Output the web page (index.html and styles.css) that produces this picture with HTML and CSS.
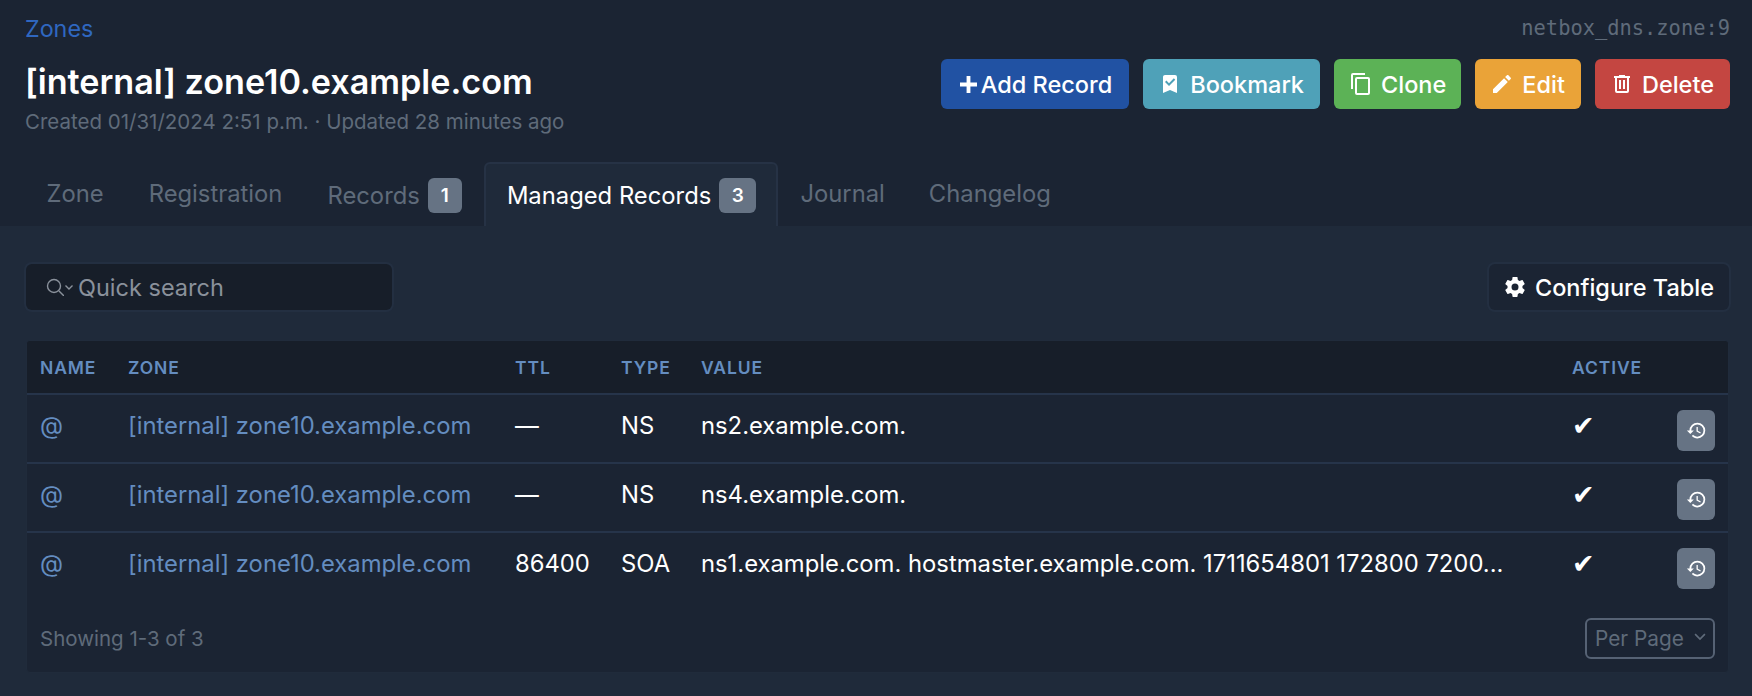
FILE: index.html
```html
<!DOCTYPE html>
<html lang="en">
<head>
<meta charset="utf-8">
<title>[internal] zone10.example.com</title>
<link rel="stylesheet" href="styles.css">
</head>
<body>
<header class="head">
  <div class="crumb-row">
    <a class="crumb">Zones</a>
    <code class="objid">netbox_dns.zone:9</code>
  </div>
  <div class="title-row">
    <div class="title-block">
      <h1 class="title">[internal] zone10.example.com</h1>
      <p class="meta">Created 01/31/2024 2:51 p.m. · Updated 28 minutes ago</p>
    </div>
    <div class="actions">
      <a class="btn btn-blue btn-add"><svg class="ic-plus" viewBox="4 4 16 16"><path d="M12 4v16M4 12h16" fill="none" stroke="currentColor" stroke-width="3.600"/></svg>Add Record</a>
      <a class="btn btn-cyan"><svg class="ic" viewBox="0 0 24 24"><path fill="currentColor" d="M17,3A2,2 0 0,1 19,5V21L12,18L5,21V5C5,3.89 5.9,3 7,3H17M11,14L17.25,7.76L15.84,6.34L11,11.18L8.41,8.59L7,10L11,14Z"/></svg>Bookmark</a>
      <a class="btn btn-green"><svg class="ic" viewBox="0 0 24 24"><path fill="currentColor" d="M19,21H8V7H19M19,5H8A2,2 0 0,0 6,7V21A2,2 0 0,0 8,23H19A2,2 0 0,0 21,21V7A2,2 0 0,0 19,5M16,1H4A2,2 0 0,0 2,3V17H4V3H16V1Z"/></svg>Clone</a>
      <a class="btn btn-orange"><svg class="ic" viewBox="0 0 24 24"><path fill="currentColor" d="M20.71,7.04C21.1,6.65 21.1,6 20.71,5.63L18.37,3.29C18,2.9 17.35,2.9 16.96,3.29L15.12,5.12L18.87,8.87M3,17.25V21H6.75L17.81,9.93L14.06,6.18L3,17.25Z"/></svg>Edit</a>
      <a class="btn btn-red"><svg class="ic" viewBox="0 0 24 24"><path fill="currentColor" d="M9,3V4H4V6H5V19A2,2 0 0,0 7,21H17A2,2 0 0,0 19,19V6H20V4H15V3H9M7,6H17V19H7V6M9,8V17H11V8H9M13,8V17H15V8H13Z"/></svg>Delete</a>
    </div>
  </div>
  <nav class="tabs">
    <a class="tab tab-raised">Zone</a>
    <a class="tab tab-raised">Registration</a>
    <a class="tab">Records<span class="badge">1</span></a>
    <a class="tab active">Managed Records<span class="badge">3</span></a>
    <a class="tab tab-raised tab-journal">Journal</a>
    <a class="tab tab-raised">Changelog</a>
  </nav>
</header>
<main class="content">
  <div class="toolbar">
    <div class="search">
      <svg class="search-ic" viewBox="1 2 18 18"><circle cx="9" cy="10" r="6.500" fill="none" stroke="currentColor" stroke-width="1.400"/><path d="M14 15l5 5" fill="none" stroke="currentColor" stroke-width="1.400"/></svg><svg class="search-caret" viewBox="0 0 10 10"><path d="M1.500 3.500 5 7l3.500-3.500" fill="none" stroke="currentColor" stroke-width="1.400"/></svg>
      <span class="search-text">Quick search</span>
    </div>
    <a class="config"><svg class="ic-gear" viewBox="0 0 24 24"><path fill="currentColor" d="M12,15.5A3.5,3.5 0 0,1 8.5,12A3.5,3.5 0 0,1 12,8.5A3.5,3.5 0 0,1 15.5,12A3.5,3.5 0 0,1 12,15.5M19.43,12.97C19.47,12.65 19.5,12.33 19.5,12C19.5,11.67 19.47,11.34 19.43,11L21.54,9.37C21.73,9.22 21.78,8.95 21.66,8.73L19.66,5.27C19.54,5.05 19.27,4.96 19.05,5.05L16.56,6.05C16.04,5.66 15.5,5.32 14.87,5.07L14.5,2.42C14.46,2.18 14.25,2 14,2H10C9.75,2 9.54,2.18 9.5,2.42L9.13,5.07C8.5,5.32 7.96,5.66 7.44,6.05L4.95,5.05C4.73,4.96 4.46,5.05 4.34,5.27L2.34,8.73C2.21,8.95 2.27,9.22 2.46,9.37L4.57,11C4.53,11.34 4.5,11.67 4.5,12C4.5,12.33 4.53,12.65 4.57,12.97L2.46,14.63C2.27,14.78 2.21,15.05 2.34,15.27L4.34,18.73C4.46,18.95 4.73,19.03 4.95,18.95L7.44,17.94C7.96,18.34 8.5,18.68 9.13,18.93L9.5,21.58C9.54,21.82 9.75,22 10,22H14C14.25,22 14.46,21.82 14.5,21.58L14.87,18.93C15.5,18.67 16.04,18.34 16.56,17.94L19.05,18.95C19.27,19.03 19.54,18.95 19.66,18.73L21.66,15.27C21.78,15.05 21.73,14.78 21.54,14.63L19.43,12.97Z"/></svg>Configure Table</a>
  </div>
  <section class="card">
    <table class="grid">
      <thead>
        <tr>
          <th class="c-name">NAME</th><th class="c-zone">ZONE</th><th class="c-ttl">TTL</th><th class="c-type">TYPE</th><th class="c-value">VALUE</th><th class="c-active">ACTIVE</th><th class="c-act"></th>
        </tr>
      </thead>
      <tbody>
        <tr>
          <td><a class="lnk">@</a></td><td><a class="lnk">[internal] zone10.example.com</a></td><td>—</td><td>NS</td><td>ns2.example.com.</td><td class="check">✔</td>
          <td class="act-cell"><a class="hist"><svg class="ic-hist" viewBox="0 0 24 24"><path fill="currentColor" d="M13.5,8H12V13L16.28,15.54L17,14.33L13.5,12.25V8M13,3A9,9 0 0,0 4,12H1L4.96,16.03L9,12H6A7,7 0 0,1 13,5A7,7 0 0,1 20,12A7,7 0 0,1 13,19C11.07,19 9.32,18.21 8.06,16.94L6.64,18.36C8.27,20 10.5,21 13,21A9,9 0 0,0 22,12A9,9 0 0,0 13,3"/></svg></a></td>
        </tr>
        <tr>
          <td><a class="lnk">@</a></td><td><a class="lnk">[internal] zone10.example.com</a></td><td>—</td><td>NS</td><td>ns4.example.com.</td><td class="check">✔</td>
          <td class="act-cell"><a class="hist"><svg class="ic-hist" viewBox="0 0 24 24"><path fill="currentColor" d="M13.5,8H12V13L16.28,15.54L17,14.33L13.5,12.25V8M13,3A9,9 0 0,0 4,12H1L4.96,16.03L9,12H6A7,7 0 0,1 13,5A7,7 0 0,1 20,12A7,7 0 0,1 13,19C11.07,19 9.32,18.21 8.06,16.94L6.64,18.36C8.27,20 10.5,21 13,21A9,9 0 0,0 22,12A9,9 0 0,0 13,3"/></svg></a></td>
        </tr>
        <tr>
          <td><a class="lnk">@</a></td><td><a class="lnk">[internal] zone10.example.com</a></td><td>86400</td><td>SOA</td><td>ns1.example.com. hostmaster.example.com. 1711654801 172800 7200...</td><td class="check">✔</td>
          <td class="act-cell"><a class="hist"><svg class="ic-hist" viewBox="0 0 24 24"><path fill="currentColor" d="M13.5,8H12V13L16.28,15.54L17,14.33L13.5,12.25V8M13,3A9,9 0 0,0 4,12H1L4.96,16.03L9,12H6A7,7 0 0,1 13,5A7,7 0 0,1 20,12A7,7 0 0,1 13,19C11.07,19 9.32,18.21 8.06,16.94L6.64,18.36C8.27,20 10.5,21 13,21A9,9 0 0,0 22,12A9,9 0 0,0 13,3"/></svg></a></td>
        </tr>
      </tbody>
    </table>
    <footer class="foot">
      <span class="showing">Showing 1-3 of 3</span>
      <span class="perpage">Per Page<svg class="pp-caret" viewBox="0 0 10 10"><path d="M1.500 3 5 6.500 8.500 3" fill="none" stroke="currentColor" stroke-width="1.200"/></svg></span>
    </footer>
  </section>
</main>
</body>
</html>
```
FILE: styles.css
```css
* { box-sizing: border-box; }
html, body { height: 100%; }
body {
  margin: 0;
  background: #1f2a3a;
  color: #fff;
  font-family: Inter, "Liberation Sans", sans-serif;
  font-size: 22px;
  display: flex;
  flex-direction: column;
  overflow: hidden;
}
.head { background: #1b2433; padding: 14px 22px 0 25px; height: 226px; flex: none; }
.crumb-row { display: flex; justify-content: space-between; align-items: center; height: 28px; }
.crumb { color: #2f67c0; font-size: 23.300px; }
.objid { font-family: "DejaVu Sans Mono", monospace; font-size: 20.400px; color: #5f6b7a; }
.title-row { display: flex; justify-content: space-between; margin-top: 17px; height: 79px; }
.title-block { padding-top: 2px; }
.title { margin: 0; font-size: 34.150px; font-weight: 600; line-height: 41px; }
.meta { margin: 7px 0 0; font-size: 20.500px; line-height: 26px; color: #5f6b7a; }
.actions { display: flex; gap: 14px; height: 50px; }
.btn {
  display: flex; align-items: center; gap: 8px;
  height: 50px; padding: 0 16px 0 15px;
  border-radius: 6px; font-size: 23.500px; font-weight: 500; color: #fff;
}
.ic { width: 24px; height: 24px; flex: none; }
.ic-plus { width: 17px; height: 17px; flex: none; }
.btn-add { gap: 4px; padding: 0 17px 0 19px; }
.btn-blue { background: #2152a3; }
.btn-cyan { background: #4fa1b8; }
.btn-green { background: #5cb256; padding-right: 15px; }
.btn-orange { background: #eaa338; }
.btn-red { background: #c44641; }
.tabs { display: flex; margin: 24px 0 0 -1px; align-items: flex-end; height: 64px; }
.tab {
  display: flex; align-items: center; height: 64px;
  padding: 0 20.500px; font-size: 23.800px; color: #5f6b7a;
  border: 2px solid transparent; border-bottom: 0;
}
.tab-raised { padding-bottom: 4px; }
.tab.active {
  background: #1f2a3a; color: #fff; padding-right: 19.500px;
  border-color: #263245; border-radius: 6px 6px 0 0;
}
.tab-journal { padding-right: 19.500px; }
.badge {
  display: flex; align-items: center; justify-content: center;
  height: 35px; padding: 0 13px; margin-left: 8px;
  border-radius: 6px; background: #667384; color: #fff;
  font-size: 19px; font-weight: 600;
}
.active .badge { padding: 0 12.500px; }
.content { padding: 38px 23px 0 26px; flex: 1; }
.toolbar { display: flex; justify-content: space-between; align-items: center; height: 46px; }
.search {
  display: flex; align-items: center; width: 366px; height: 46px; padding-left: 20px;
  background: #171e29; border-radius: 6px; box-shadow: 0 0 0 2px #232f41;
  color: #8a919b; font-size: 23.500px;
}
.search-ic { width: 18px; height: 18px; flex: none; }
.search-caret { width: 10px; height: 10px; flex: none; margin-right: 4px; }
.config {
  display: flex; align-items: center; gap: 8px; height: 46px; padding: 0 15px 0 14px;
  background: #1b2433; border-radius: 6px; box-shadow: 0 0 0 2px #232f41;
  font-size: 23.500px; font-weight: 500; color: #fff;
}
.ic-gear { width: 24px; height: 24px; flex: none; }
.card {
  margin-top: 30px; background: #1b2433; border: 1px solid #202b3b; border-radius: 4px;
  height: 333px; overflow: hidden;
}
.grid { width: 100%; border-collapse: collapse; table-layout: fixed; }
.grid th {
  height: 53px; padding: 0 0 0 13px; text-align: left; background: #171e29;
  color: #648dc0; font-size: 17.500px; font-weight: 600; letter-spacing: .9px;
  border-bottom: 2px solid #26344a;
}
.grid td {
  height: 69px; padding: 0 0 7px 13px; font-size: 23.800px; color: #fff;
  border-bottom: 2px solid #26344a; white-space: nowrap; overflow: hidden;
}
.grid tbody tr:last-child td { border-bottom: 0; }
.c-name { width: 88px; }
.c-zone { width: 387px; }
.c-ttl { width: 106px; }
.c-type { width: 80px; }
.c-value { width: 871px; }
.c-active { width: 105px; }
.lnk { color: #648dc0; }
.grid td.check { font-size: 27px; line-height: 1; }
.grid td.act-cell { padding: 3px 0 0 13px; }
.hist {
  display: flex; align-items: center; justify-content: center;
  width: 38px; height: 41px; border-radius: 6px; background: #667384; color: #fff;
}
.ic-hist { width: 21px; height: 21px; }
.foot { display: flex; justify-content: space-between; align-items: center; padding: 0 13px 0 13px; height: 74px; }
.showing { font-size: 20.500px; color: #5f6b7a; }
.perpage {
  display: flex; align-items: center; justify-content: space-between;
  width: 130px; height: 41px; padding: 0 6px 0 8px;
  border: 2px solid #566274; border-radius: 6px; color: #5f6b7a; font-size: 20.800px;
}
.pp-caret { width: 14px; height: 14px; flex: none; margin-bottom: 3px; }
```
